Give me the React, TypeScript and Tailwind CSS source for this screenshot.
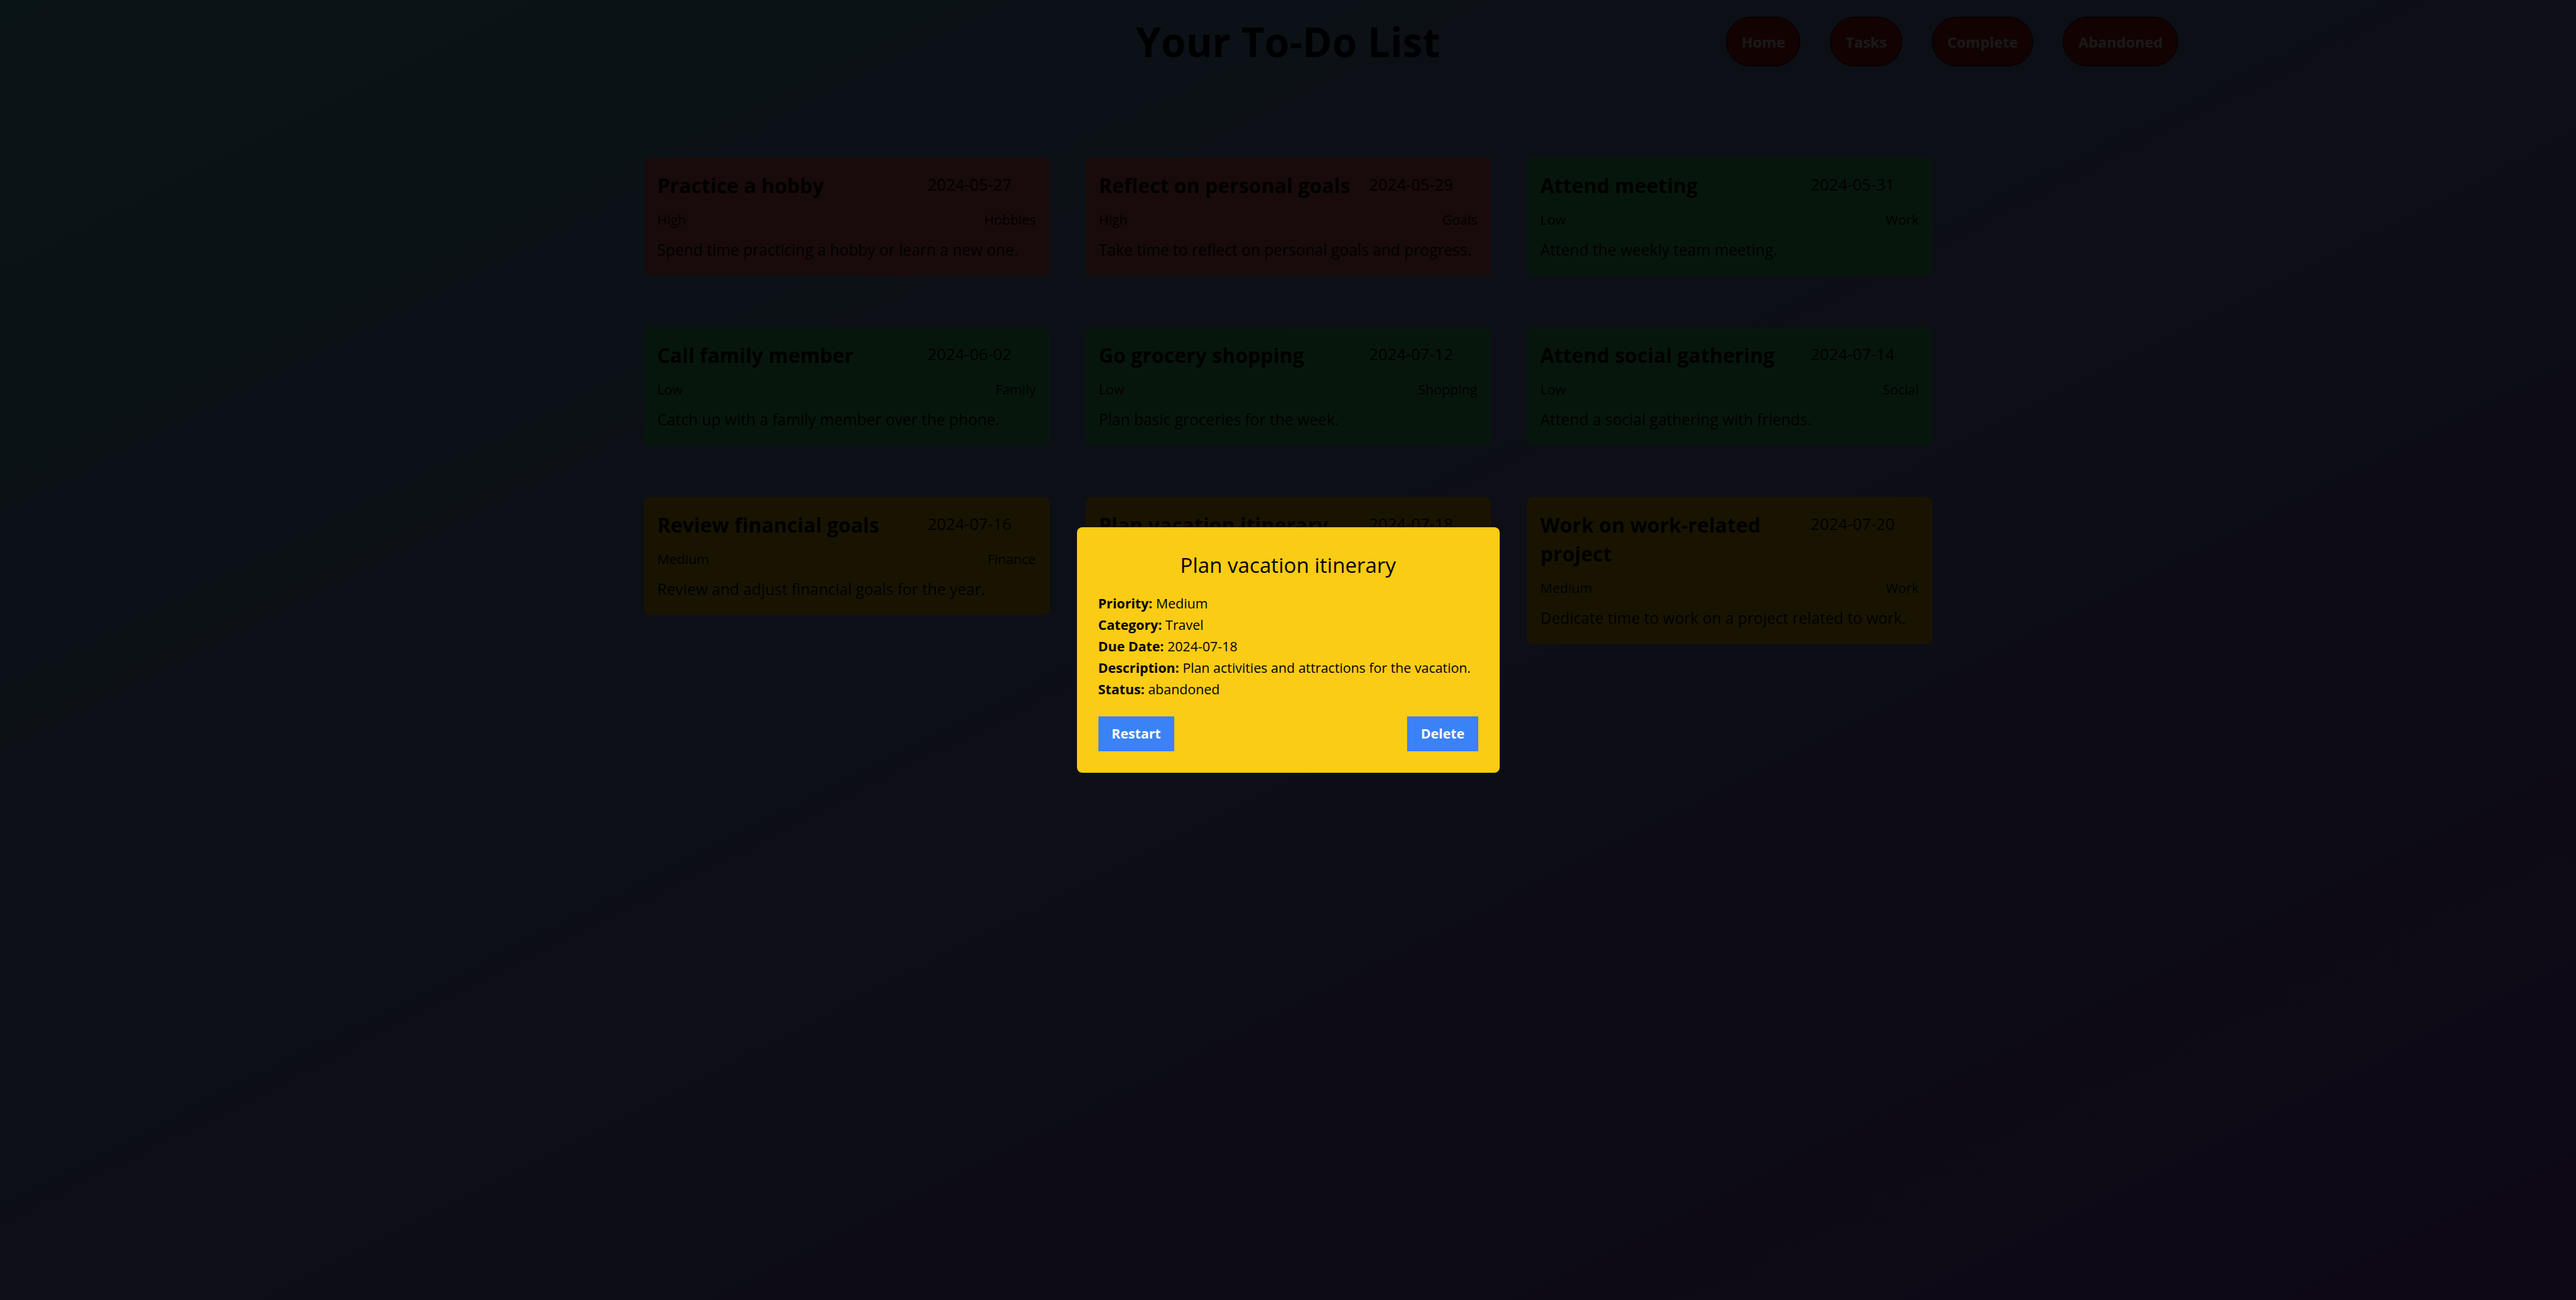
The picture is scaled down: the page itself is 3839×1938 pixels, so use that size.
import React from "react";

type Task = {
  title: string;
  date: string;
  priority: string;
  category: string;
  description: string;
  color: "red" | "green" | "yellow";
};

const tasks: Task[] = [
  { title: "Practice a hobby", date: "2024-05-27", priority: "High", category: "Hobbies", description: "Spend time practicing a hobby or learn a new one.", color: "red" },
  { title: "Reflect on personal goals", date: "2024-05-29", priority: "High", category: "Goals", description: "Take time to reflect on personal goals and progress.", color: "red" },
  { title: "Attend meeting", date: "2024-05-31", priority: "Low", category: "Work", description: "Attend the weekly team meeting.", color: "green" },
  { title: "Call family member", date: "2024-06-02", priority: "Low", category: "Family", description: "Catch up with a family member over the phone.", color: "green" },
  { title: "Go grocery shopping", date: "2024-07-12", priority: "Low", category: "Shopping", description: "Plan basic groceries for the week.", color: "green" },
  { title: "Attend social gathering", date: "2024-07-14", priority: "Low", category: "Social", description: "Attend a social gathering with friends.", color: "green" },
  { title: "Review financial goals", date: "2024-07-16", priority: "Medium", category: "Finance", description: "Review and adjust financial goals for the year.", color: "yellow" },
  { title: "Plan vacation itinerary", date: "2024-07-18", priority: "Medium", category: "Travel", description: "Plan activities and attractions for the vacation.", color: "yellow" },
  { title: "Work on work-related project", date: "2024-07-20", priority: "Medium", category: "Work", description: "Dedicate time to work on a project related to work.", color: "yellow" },
];

const colorClass: Record<Task["color"], string> = {
  red: "bg-[#f87171]",
  green: "bg-[#4ade80]",
  yellow: "bg-[#facc15]",
};

function TaskCard({ task }: { task: Task }) {
  return (
    <div className={`${colorClass[task.color]} rounded-lg px-5 pt-5 pb-[23px] text-black`}>
      <div className="flex items-start">
        <h3 className="min-w-0 flex-1 text-3xl font-bold leading-[43px]">{task.title}</h3>
        <span className="mr-9 mt-1 shrink-0 text-2xl leading-8">{task.date}</span>
      </div>
      <div className="mt-4 flex justify-between text-xl leading-7">
        <span>{task.priority}</span>
        <span>{task.category}</span>
      </div>
      <p className="mt-[14px] text-[23px] leading-8">{task.description}</p>
    </div>
  );
}

export default function App() {
  const navItems = ["Home", "Tasks", "Complete", "Abandoned"];
  return (
    <div className="relative min-h-screen bg-linear-to-br from-[#62c6da] to-[#8c50dc] font-['Open_Sans',sans-serif] text-black">
      <header className="grid grid-cols-3 items-center pt-[25px]">
        <div />
        <h1 className="text-center text-6xl font-bold leading-none">Your To-Do List</h1>
        <nav className="flex gap-[44px] pl-[13px]">
          {navItems.map((n) => (
            <button
              key={n}
              className="rounded-full border border-black bg-[#b91c1c] px-[22px] py-5 text-[22px] font-bold leading-8 text-white"
            >
              {n}
            </button>
          ))}
        </nav>
      </header>

      <main className="mx-auto mt-[136px] grid w-[1920px] grid-cols-3 items-start gap-x-[54px] gap-y-[77px]">
        {tasks.map((t) => (
          <TaskCard key={t.title} task={t} />
        ))}
      </main>

      <div className="fixed inset-0 flex items-center justify-center bg-black/90">
        <div className="w-[630px] rounded-lg bg-[#facc15] px-8 pt-[38px] pb-8 text-black">
          <h2 className="mb-6 text-center text-[31px] font-medium leading-9">Plan vacation itinerary</h2>
          <div className="text-xl leading-8">
            <p><span className="font-bold">Priority:</span> Medium</p>
            <p><span className="font-bold">Category:</span> Travel</p>
            <p><span className="font-bold">Due Date:</span> 2024-07-18</p>
            <p className="whitespace-nowrap"><span className="font-bold">Description:</span> Plan activities and attractions for the vacation.</p>
            <p><span className="font-bold">Status:</span> abandoned</p>
          </div>
          <div className="mt-6 flex justify-between">
            <button className="bg-[#3b82f6] px-5 py-3 text-xl font-bold leading-7 text-white">Restart</button>
            <button className="bg-[#3b82f6] px-5 py-3 text-xl font-bold leading-7 text-white">Delete</button>
          </div>
        </div>
      </div>
    </div>
  );
}
